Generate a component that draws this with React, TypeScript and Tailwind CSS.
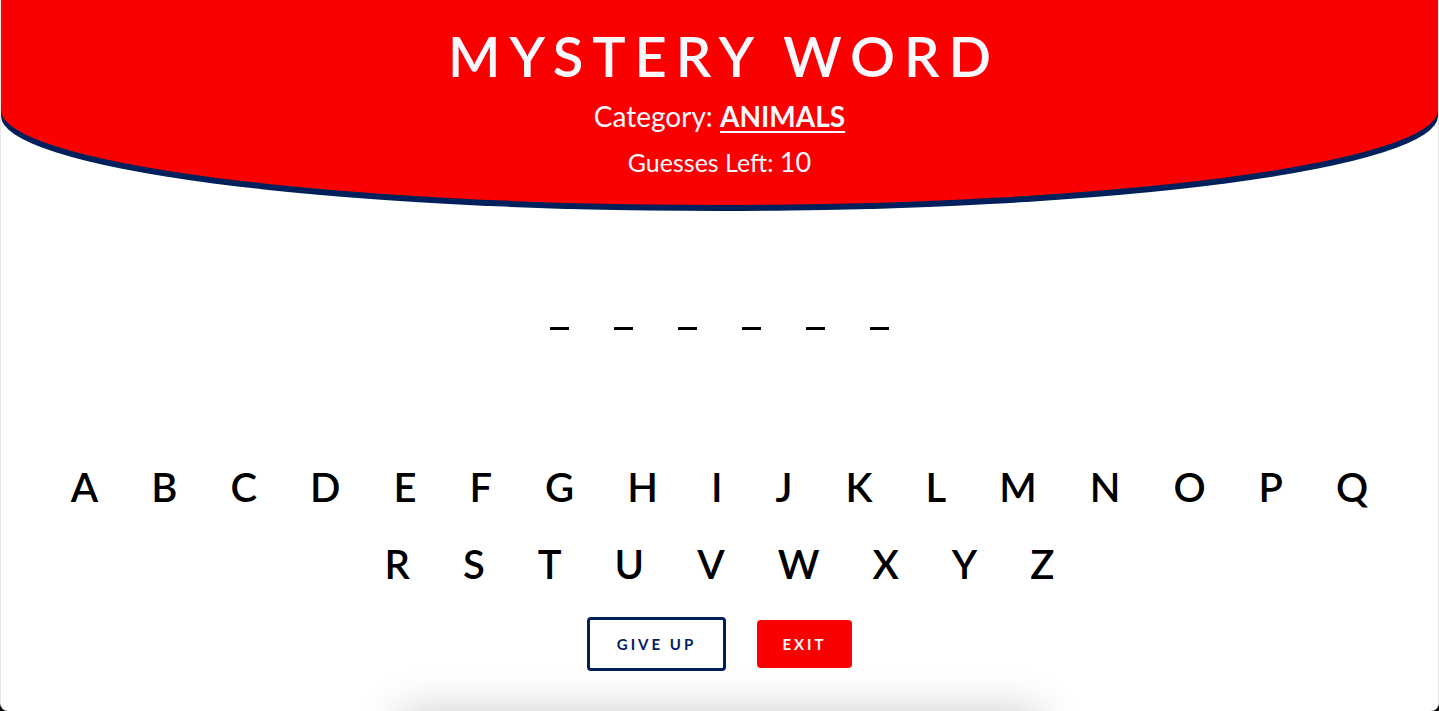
const ROW_ONE = "ABCDEFGHIJKLMNOPQ".split("");
const ROW_TWO = "RSTUVWXYZ".split("");
const WORD_LENGTH = 6;

function LetterRow({ letters }: { letters: string[] }) {
  return (
    <div className="flex justify-center">
      {letters.map((l) => (
        <button
          key={l}
          className="px-[26.5px] text-[40px] font-semibold leading-[77px] text-black"
        >
          {l}
        </button>
      ))}
    </div>
  );
}

export default function App() {
  return (
    <div className="h-[711px] overflow-hidden bg-black font-['Lato','Open_Sans',sans-serif]">
      <div className="relative h-full overflow-hidden rounded-b-[8px] border-x border-[#e6e6e6] bg-white">
        <header className="flex h-[205px] flex-col items-center rounded-bl-[50%_95px] rounded-br-[50%_95px] bg-[#fa0000] pt-[28px] text-[#f8f8ff] shadow-[0_6px_0_#00205b]">
          <h1 className="pl-[0.16em] text-[56px] font-semibold leading-none tracking-[0.16em]">
            MYSTERY WORD
          </h1>
          <p className="mt-[15px] text-[28px] leading-[34px]">
            Category: <span className="font-bold underline underline-offset-[4px]">ANIMALS</span>
          </p>
          <p className="mt-[14px] text-[25px] leading-[30px]">
            Guesses Left: <span className="text-[27px]">10</span>
          </p>
        </header>

        <main className="flex flex-col items-center">
          <div className="mt-[122px] flex gap-[45px]">
            {Array.from({ length: WORD_LENGTH }).map((_, i) => (
              <span key={i} className="block h-[3px] w-[19px] bg-black" />
            ))}
          </div>

          <div className="mt-[119px]">
            <LetterRow letters={ROW_ONE} />
            <LetterRow letters={ROW_TWO} />
          </div>

          <div className="mt-[14px] flex items-center gap-[31px]">
            <button className="h-[54px] w-[139px] rounded-[4px] border-[3px] border-[#00205b] text-[15px] font-bold tracking-[0.2em] text-[#00205b]">
              GIVE UP
            </button>
            <button className="h-[48px] w-[95px] rounded-[4px] bg-[#fa0000] text-[15px] font-bold tracking-[0.2em] text-[#f8f8ff]">
              EXIT
            </button>
          </div>

          <div className="mt-[42px] h-[200px] w-[640px] rounded-[12px] bg-white shadow-[0_0_45px_rgba(0,0,0,0.22)]" />
        </main>
      </div>
    </div>
  );
}
